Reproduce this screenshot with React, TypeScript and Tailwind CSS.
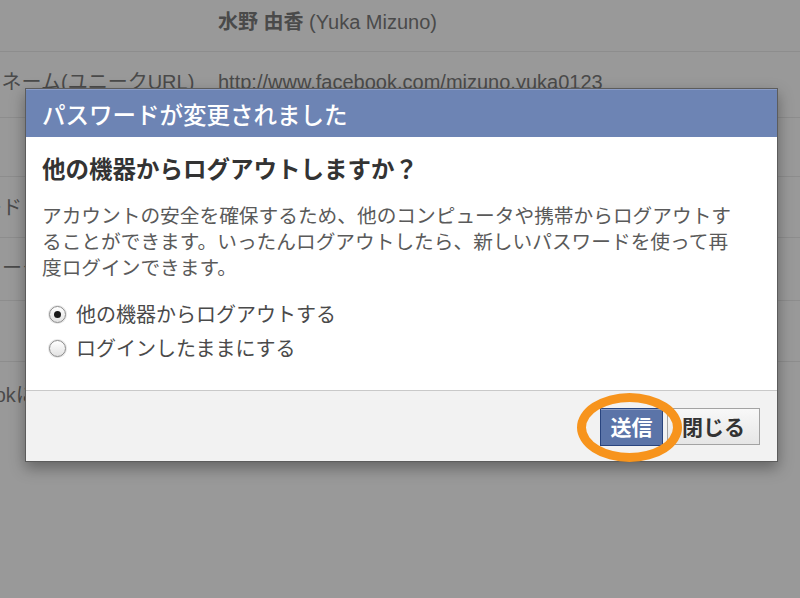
import React from "react";

const rows = [
  { label: "名前", value: "name", h: "h-[52px]", pt: "pt-[8px]" },
  { label: "ユーザーネーム(ユニークURL)", value: "url", h: "h-[66px]", pt: "pt-[16px]" },
  { label: "メール", value: "", h: "h-[59px]", pt: "pt-[16px]" },
  { label: "パスワード", value: "", h: "h-[61px]", pt: "pt-[17px]" },
  { label: "ネットワーク", value: "", h: "h-[63px]", pt: "pt-[16px]" },
  { label: "言語", value: "", h: "h-[61px]", pt: "pt-[16px]" },
];

function Radio({ checked }: { checked: boolean }) {
  return (
    <span className="flex h-[17px] w-[17px] items-center justify-center rounded-full border border-[#8a8a8a] bg-gradient-to-b from-white to-[#e2e2e2] shadow-[0_0_0_1px_#e6e6e6]">
      {checked && <span className="h-[7px] w-[7px] rounded-full bg-[#1a1a1a]" />}
    </span>
  );
}

export default function App() {
  return (
    <div className="relative h-[598px] w-[800px] overflow-hidden bg-[#999999] font-['Noto_Sans_CJK_JP','Noto_Sans',sans-serif]">
      {/* dimmed page behind */}
      <div className="ml-[-78px] w-[878px] font-['Liberation_Sans','Noto_Sans_CJK_JP',sans-serif]">
        {rows.map((r, i) => (
          <div key={i} className={`flex items-start border-b border-[#8d8d8d] ${r.h} ${r.pt}`}>
            <div className="w-[296px] shrink-0 whitespace-nowrap text-[20px] leading-[28px] text-[#4a4a4a]">
              {r.label}
            </div>
            <div className="whitespace-nowrap text-[20px] leading-[28px] text-[#4a4a4a]">
              {r.value === "name" && (
                <span>
                  <span className="font-bold">水野 由香</span> (Yuka Mizuno)
                </span>
              )}
              {r.value === "url" && <span>http://www.facebook.com/mizuno.yuka0123</span>}
            </div>
          </div>
        ))}
        <div className="ml-[6px] whitespace-nowrap pt-[19px] text-[20px] leading-[28px] text-[#4a4a4a]">
          Facebookにアクセスしているアプリ
        </div>
      </div>

      {/* dialog */}
      <div className="absolute left-[25px] top-[88px] flex h-[374px] w-[753px] flex-col border border-[#5c5c5c] bg-white shadow-[0_6px_14px_rgba(0,0,0,0.35)]">
        <div className="flex h-[48px] items-center border-t border-[#8a9cc6] bg-[#6d84b4] pl-[16px]">
          <span className="whitespace-nowrap text-[23.5px] font-medium leading-[32px] text-white">
            パスワードが変更されました
          </span>
        </div>
        <div className="h-[253px] px-[16px] pt-[15px]">
          <div className="whitespace-nowrap text-[23.5px] font-bold leading-[32px] text-[#333333]">
            他の機器からログアウトしますか？
          </div>
          <div className="mt-[18px] text-[19.7px] leading-[26px] text-[#5a5a5a]">
            <div className="whitespace-nowrap">アカウントの安全を確保するため、他のコンピュータや携帯からログアウトす</div>
            <div className="whitespace-nowrap">ることができます。いったんログアウトしたら、新しいパスワードを使って再</div>
            <div className="whitespace-nowrap">度ログインできます。</div>
          </div>
          <div className="mt-[17px] flex flex-col">
            <label className="flex h-[34px] items-center gap-[10px] pl-[7px]">
              <Radio checked={true} />
              <span className="whitespace-nowrap text-[20px] text-[#4a4a4a]">他の機器からログアウトする</span>
            </label>
            <label className="flex h-[34px] items-center gap-[10px] pl-[7px]">
              <Radio checked={false} />
              <span className="whitespace-nowrap text-[20px] text-[#4a4a4a]">ログインしたままにする</span>
            </label>
          </div>
        </div>
        <div className="flex flex-1 items-start justify-end gap-[4px] border-t border-[#c9c9c9] bg-[#f2f2f2] pr-[17px] pt-[17px]">
          <button className="flex h-[38px] w-[63px] items-center justify-center border border-[#29447e] bg-[#5b74a8] text-[21px] font-bold text-white shadow-[inset_0_1px_0_#8a9cc2]">
            送信
          </button>
          <button className="flex h-[37px] w-[93px] items-center justify-center border border-[#a3a3a3] bg-gradient-to-b from-[#f8f8f8] to-[#e6e6e6] text-[21px] font-bold text-[#333333]">
            閉じる
          </button>
        </div>
      </div>

      {/* orange annotation ring */}
      <div className="absolute left-[577px] top-[393px] h-[69px] w-[105px] rounded-[50%] border-[9px] border-[#f7941d]" />
    </div>
  );
}
